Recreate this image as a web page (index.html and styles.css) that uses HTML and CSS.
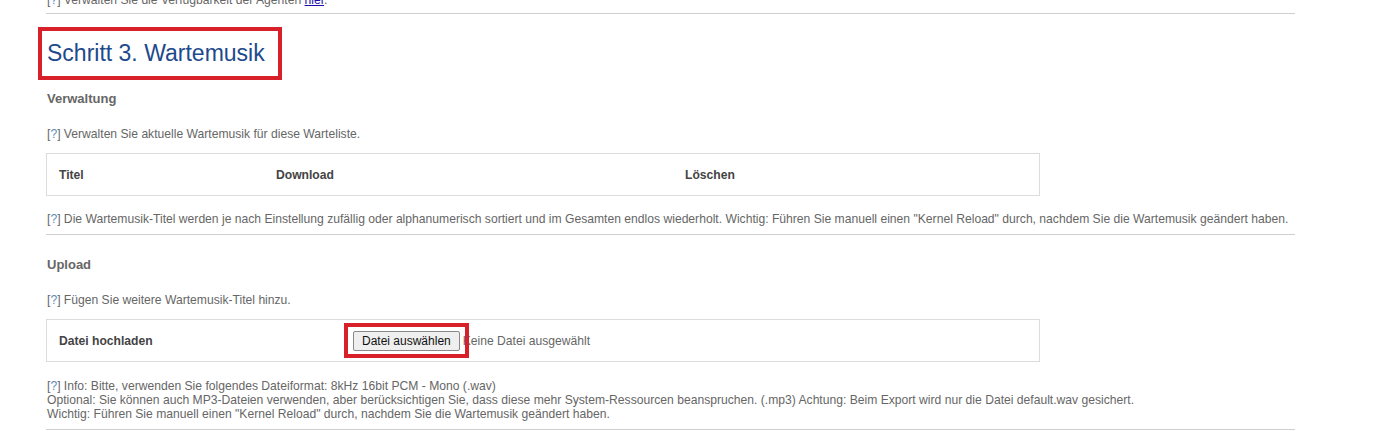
FILE: index.html
```html
<!DOCTYPE html>
<html lang="de">
<head>
<meta charset="utf-8">
<title>Schritt 3. Wartemusik</title>
<link rel="stylesheet" href="styles.css">
</head>
<body>
<main class="page">
  <p class="hint hint-top"><span class="q">[<span class="qm">?</span>]</span> Verwalten Sie die Verfügbarkeit der Agenten <a href="#" class="link">hier</a>.</p>
  <div class="sep sep-top"></div>

  <h2 class="step-title">Schritt 3. Wartemusik</h2>

  <h3 class="sub sub-first">Verwaltung</h3>
  <p class="hint hint-intro"><span class="q">[<span class="qm">?</span>]</span> Verwalten Sie aktuelle Wartemusik für diese Warteliste.</p>

  <div class="box box-music">
    <div class="cell head">Titel</div>
    <div class="cell head">Download</div>
    <div class="cell head">Löschen</div>
  </div>

  <p class="hint hint-note"><span class="q">[<span class="qm">?</span>]</span> Die Wartemusik-Titel werden je nach Einstellung zufällig oder alphanumerisch sortiert und im Gesamten endlos wiederholt. Wichtig: Führen Sie manuell einen "Kernel Reload" durch, nachdem Sie die Wartemusik geändert haben.</p>
  <div class="sep sep-mid"></div>

  <h3 class="sub sub-second">Upload</h3>
  <p class="hint hint-intro"><span class="q">[<span class="qm">?</span>]</span> Fügen Sie weitere Wartemusik-Titel hinzu.</p>

  <div class="box box-upload">
    <div class="cell head">Datei hochladen</div>
    <div class="cell file">
      <span class="file-btn-wrap">
        <button class="file-btn" type="button">Datei auswählen</button>
        <span class="mark"></span>
      </span>
      <span class="file-none">Keine Datei ausgewählt</span>
    </div>
  </div>

  <p class="hint hint-info"><span class="q">[<span class="qm">?</span>]</span> Info: Bitte, verwenden Sie folgendes Dateiformat: 8kHz 16bit PCM - Mono (.wav)<br>Optional: Sie können auch MP3-Dateien verwenden, aber berücksichtigen Sie, dass diese mehr System-Ressourcen beanspruchen. (.mp3) Achtung: Beim Export wird nur die Datei default.wav gesichert.<br>Wichtig: Führen Sie manuell einen "Kernel Reload" durch, nachdem Sie die Wartemusik geändert haben.</p>
  <div class="sep sep-bottom"></div>
</main>
</body>
</html>
```

FILE: styles.css
```css
html, body {
  margin: 0;
  padding: 0;
  background: #ffffff;
}

body {
  font-family: "Liberation Sans", Arial, sans-serif;
  font-size: 12.13px;
  color: #666666;
  overflow: hidden;
}

.page {
  width: 1249px;
  padding-left: 46px;
}

.hint {
  margin: 0;
  line-height: 14px;
  white-space: nowrap;
}

.q {
  color: #666666;
}

.qm {
  color: #5b8db4;
}

.link {
  color: #1a0dab;
  text-decoration: underline;
}

.hint-top {
  margin-top: -7px;
  padding-left: 1px;
}

.hint-intro,
.hint-note,
.hint-info {
  padding-left: 1px;
}

.sep {
  height: 0;
  border-top: 1px solid #cfcfcf;
}

.sep-top {
  margin-top: 6px;
}

.step-title {
  display: inline-block;
  margin: 13px 0 0 -8px;
  padding: 0 13px 0 5px;
  border: 4px solid #d8202b;
  height: 45px;
  line-height: 45px;
  font-size: 23px;
  font-weight: normal;
  color: #1d4a8c;
}

.sub {
  margin: 0;
  font-size: 13px;
  line-height: 16px;
  font-weight: bold;
  color: #666666;
  padding-left: 1px;
}

.sub-first {
  margin-top: 11px;
}

.hint-intro {
  margin-top: 20px;
}

.box {
  display: grid;
  width: 992px;
  border: 1px solid #dcdcdc;
  margin-top: 12px;
  height: 41px;
  align-items: center;
}

.box-music {
  grid-template-columns: 217px 409px 1fr;
}

.box-upload {
  grid-template-columns: 294px 1fr;
}

.cell {
  padding-left: 12px;
  line-height: 16px;
}

.head {
  font-weight: bold;
  color: #444444;
}

.hint-note {
  margin-top: 16px;
}

.sep-mid {
  margin-top: 8px;
}

.sub-second {
  margin-top: 22px;
}

.file {
  display: flex;
  align-items: center;
  gap: 3px;
}

.file-btn-wrap {
  position: relative;
  display: inline-flex;
}

.file-btn {
  font-family: "Liberation Sans", Arial, sans-serif;
  font-size: 12px;
  color: #111111;
  height: 20px;
  padding: 0 8px;
  border: 1px solid #8a8a8a;
  border-radius: 2px;
  background: #efefef;
  line-height: 18px;
}

.mark {
  position: absolute;
  left: -9px;
  top: -8px;
  right: -9px;
  bottom: -7px;
  border: 4px solid #d8202b;
  pointer-events: none;
}

.file-none {
  color: #666666;
}

.hint-info {
  margin-top: 17px;
  white-space: normal;
}

.sep-bottom {
  margin-top: 8px;
}
```
